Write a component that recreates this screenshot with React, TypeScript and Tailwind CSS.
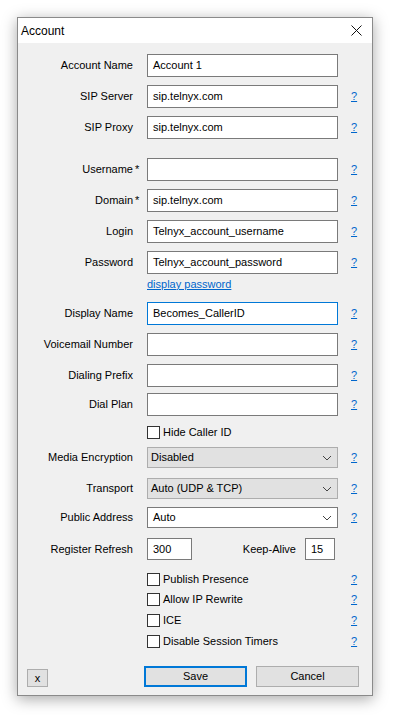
import type { ReactNode } from 'react'

const font = { fontFamily: '"Liberation Sans", Arial, sans-serif' }

function Help() {
  return <span className="ml-[13px] text-[11px] text-[#0066cc] underline">?</span>
}

function Row({
  label,
  star,
  help = true,
  className,
  children,
}: {
  label: string
  star?: boolean
  help?: boolean
  className: string
  children: ReactNode
}) {
  return (
    <div className={`flex items-center ${className}`}>
      <div className="w-[115px] text-right">{label}</div>
      <div className="w-[14px] pl-[2px]">{star ? '*' : ''}</div>
      <div className="w-[191px]">{children}</div>
      {help && <Help />}
    </div>
  )
}

function TextBox({ value = '', focused = false }: { value?: string; focused?: boolean }) {
  return (
    <div
      className={`h-[23px] w-full flex items-center px-[5px] bg-white border ${
        focused ? 'border-[#0078d7]' : 'border-[#7a7a7a]'
      }`}
    >
      {value}
    </div>
  )
}

function Chevron() {
  return (
    <svg width="10" height="6" viewBox="0 0 10 6" className="ml-auto mr-[5px]">
      <path d="M1 1 L5 5 L9 1" fill="none" stroke="#444" strokeWidth="1" />
    </svg>
  )
}

function Combo({ value, editable = false }: { value: string; editable?: boolean }) {
  return (
    <div
      className={`h-[21px] w-full flex items-center border ${
        editable ? 'bg-white border-[#7a7a7a] pl-[5px]' : 'bg-[#e1e1e1] border-[#adadad] pl-[3px]'
      }`}
    >
      <span>{value}</span>
      <Chevron />
    </div>
  )
}

function Check({ label, help = true, className }: { label: string; help?: boolean; className: string }) {
  return (
    <div className={`flex items-center h-[13px] ${className}`}>
      <div className="w-[129px]" />
      <div className="w-[191px] flex items-center">
        <div className="w-[13px] h-[13px] border border-[#333] bg-white" />
        <span className="ml-[3px]">{label}</span>
      </div>
      {help && <Help />}
    </div>
  )
}

export default function App() {
  return (
    <div className="min-h-screen bg-white pt-[17px] pl-[17px] text-[11px] text-black" style={font}>
      <div className="w-[356px] h-[679px] border border-[#8a8a8a] bg-[#f0f0f0] shadow-[0_3px_14px_rgba(0,0,0,0.35)] flex flex-col">
        {/* Title bar */}
        <div className="h-[25px] bg-white flex items-center justify-between pl-[3px] pr-[10px]">
          <span className="text-[12px]">Account</span>
          <svg width="11" height="11" viewBox="0 0 11 11">
            <path d="M0.5 0.5 L10.5 10.5 M10.5 0.5 L0.5 10.5" stroke="#111" strokeWidth="1" />
          </svg>
        </div>

        {/* Form */}
        <div className="flex flex-col">
          <Row label="Account Name" help={false} className="mt-[11px]">
            <TextBox value="Account 1" />
          </Row>
          <Row label="SIP Server" className="mt-[8px]">
            <TextBox value="sip.telnyx.com" />
          </Row>
          <Row label="SIP Proxy" className="mt-[8px]">
            <TextBox value="sip.telnyx.com" />
          </Row>

          <Row label="Username" star className="mt-[19px]">
            <TextBox />
          </Row>
          <Row label="Domain" star className="mt-[8px]">
            <TextBox value="sip.telnyx.com" />
          </Row>
          <Row label="Login" className="mt-[8px]">
            <TextBox value="Telnyx_account_username" />
          </Row>
          <Row label="Password" className="mt-[8px]">
            <TextBox value="Telnyx_account_password" />
          </Row>
          <div className="mt-[3px] h-[14px] flex items-center pl-[129px]">
            <span className="text-[#0066cc] underline">display password</span>
          </div>

          <Row label="Display Name" className="mt-[11px]">
            <TextBox value="Becomes_CallerID" focused />
          </Row>
          <Row label="Voicemail Number" className="mt-[8px]">
            <TextBox />
          </Row>
          <Row label="Dialing Prefix" className="mt-[8px]">
            <TextBox />
          </Row>
          <Row label="Dial Plan" className="mt-[6px]">
            <TextBox />
          </Row>
          <Check label="Hide Caller ID" help={false} className="mt-[10px]" />

          <Row label="Media Encryption" className="mt-[8px]">
            <Combo value="Disabled" />
          </Row>
          <Row label="Transport" className="mt-[10px]">
            <Combo value="Auto (UDP & TCP)" />
          </Row>
          <Row label="Public Address" className="mt-[8px]">
            <Combo value="Auto" editable />
          </Row>
          <Row label="Register Refresh" help={false} className="mt-[10px]">
            <div className="flex items-center">
              <div className="w-[45px] h-[22px] flex items-center px-[5px] bg-white border border-[#7a7a7a]">300</div>
              <span className="flex-1 text-right pr-[9px]">Keep-Alive</span>
              <div className="w-[30px] h-[22px] flex items-center px-[5px] bg-white border border-[#7a7a7a]">15</div>
              <div className="w-[3px]" />
            </div>
          </Row>

          <Check label="Publish Presence" className="mt-[13px]" />
          <Check label="Allow IP Rewrite" className="mt-[7px]" />
          <Check label="ICE" className="mt-[8px]" />
          <Check label="Disable Session Timers" className="mt-[8px]" />

          {/* Buttons */}
          <div className="mt-[18px] flex items-center pl-[9px]">
            <div className="w-[21px] h-[18px] mt-[3px] flex items-center justify-center bg-[#e1e1e1] border border-[#adadad]">
              x
            </div>
            <div className="ml-[96px] w-[103px] h-[21px] flex items-center justify-center bg-[#e1e1e1] border-2 border-[#0078d7]">
              Save
            </div>
            <div className="ml-[9px] w-[103px] h-[21px] flex items-center justify-center bg-[#e1e1e1] border border-[#adadad]">
              Cancel
            </div>
          </div>
        </div>
      </div>
    </div>
  )
}
